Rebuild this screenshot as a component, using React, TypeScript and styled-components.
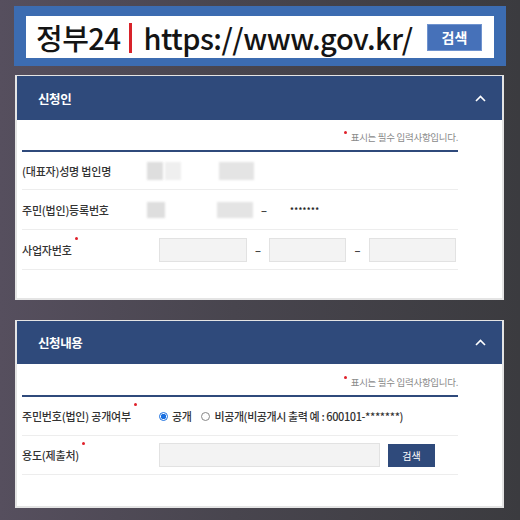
import styled, { createGlobalStyle } from 'styled-components';

const GlobalStyle = createGlobalStyle`
  html, body {
    margin: 0;
    padding: 0;
  }
  body {
    font-family: "Noto Sans CJK KR", "Noto Sans", sans-serif;
  }
`;

const Page = styled.div`
  width: 520px;
  height: 520px;
  overflow: hidden;
  box-sizing: border-box;
  padding-top: 6px;
  background: linear-gradient(90deg, #564f5e 0%, #48454e 45%, #3b3b3f 100%);
`;

const Banner = styled.div`
  margin: 0 14px;
  height: 60px;
  box-sizing: border-box;
  padding: 10px 12px 8px;
  background: #3c6cb1;
`;

const AddressBox = styled.div`
  height: 42px;
  background: #fff;
  display: flex;
  align-items: center;
  padding: 0 12px 0 10px;
  font-size: 29px;
  font-weight: 500;
  color: #141414;
  letter-spacing: -0.5px;
`;

const RedBar = styled.span`
  width: 3px;
  height: 30px;
  background: #d8232a;
  margin: 2px 11px 0 9px;
`;

const BannerButton = styled.span`
  margin-left: auto;
  width: 55px;
  height: 27px;
  box-sizing: border-box;
  border: 1px solid #6f93cf;
  background: #4671b9;
  color: #fff;
  font-size: 14px;
  font-weight: 700;
  letter-spacing: 0;
  display: flex;
  align-items: center;
  justify-content: center;
`;

const Card = styled.section<{ $top: number; $bottom: number }>`
  margin: ${(p) => p.$top}px 16px 0 15px;
  background: #fff;
  border: 2px solid #e4e4e4;
  border-top-width: 1px;
  padding-bottom: ${(p) => p.$bottom}px;
`;

const Header = styled.div<{ $h: number }>`
  height: ${(p) => p.$h}px;
  background: #2f4a7b;
  display: flex;
  align-items: center;
  padding: 0 16px 0 21px;
`;

const HeaderTitle = styled.span`
  color: #fff;
  font-size: 12.5px;
  font-weight: 700;
  letter-spacing: -0.4px;
`;

const Chevron = styled.svg`
  margin-left: auto;
`;

const Body = styled.div`
  padding: 0 44px 0 5px;
`;

const Note = styled.div<{ $pt: number }>`
  padding: ${(p) => p.$pt}px 0 6px;
  line-height: 14px;
  text-align: right;
  font-size: 9.5px;
  color: #8a8a8a;
  letter-spacing: -0.3px;
`;

const Dot = styled.span`
  display: inline-block;
  width: 3px;
  height: 3px;
  border-radius: 50%;
  background: #e0202a;
  vertical-align: 7px;
  margin-right: 4px;
`;

const Rule = styled.div`
  height: 2px;
  background: #2f4a7b;
`;

const Row = styled.div<{ $h: number }>`
  height: ${(p) => p.$h}px;
  display: grid;
  grid-template-columns: 125px 1fr;
  align-items: center;
  border-bottom: 1px solid #ededed;
`;

const Label = styled.span<{ $required?: boolean }>`
  font-size: 11px;
  font-weight: 500;
  color: #333;
  letter-spacing: -0.2px;
  position: relative;
  justify-self: start;
  white-space: nowrap;
  &::after {
    content: '';
    display: ${(p) => (p.$required ? 'block' : 'none')};
    position: absolute;
    right: -6px;
    top: -5px;
    width: 3px;
    height: 3px;
    border-radius: 50%;
    background: #e0202a;
  }
`;

const Values = styled.div<{ $indent: number }>`
  display: flex;
  align-items: center;
  padding-left: ${(p) => p.$indent}px;
`;

const Blur = styled.span<{ $w: number; $h: number; $tone: string; $ml?: number }>`
  width: ${(p) => p.$w}px;
  height: ${(p) => p.$h}px;
  background: ${(p) => p.$tone};
  margin-left: ${(p) => p.$ml ?? 0}px;
  filter: blur(0.8px);
`;

const Dash = styled.span<{ $w: number }>`
  width: ${(p) => p.$w}px;
  text-align: center;
  font-size: 11px;
  font-weight: 700;
  color: #444;
`;

const Stars = styled.span`
  font-size: 7.5px;
  font-weight: 700;
  color: #222;
  letter-spacing: 0.4px;
  margin-left: 15px;
`;

const Input = styled.span<{ $w: number }>`
  width: ${(p) => p.$w}px;
  height: 24px;
  box-sizing: border-box;
  background: #f3f3f3;
  border: 1px solid #e2e2e2;
`;

const Radio = styled.span<{ $on?: boolean }>`
  width: 9px;
  height: 9px;
  box-sizing: border-box;
  border-radius: 50%;
  border: 1px solid ${(p) => (p.$on ? '#1a6fe0' : '#888')};
  background: ${(p) => (p.$on ? 'radial-gradient(circle, #1a6fe0 0 2.5px, #fff 3px)' : '#fff')};
  margin-right: 4px;
`;

const Option = styled.span<{ $mr?: number }>`
  font-size: 11px;
  font-weight: 500;
  color: #333;
  letter-spacing: -0.4px;
  margin-right: ${(p) => p.$mr ?? 0}px;
  white-space: nowrap;
`;

const SmallButton = styled.span`
  margin-left: 8px;
  width: 47px;
  height: 23px;
  background: #2f4a7b;
  color: #fff;
  font-size: 10px;
  display: flex;
  align-items: center;
  justify-content: center;
`;

const ChevronUp = () => (
  <Chevron width="11" height="7" viewBox="0 0 11 7">
    <polyline points="1,6 5.5,1.5 10,6" fill="none" stroke="#fff" strokeWidth="1.6" />
  </Chevron>
);

const RequiredNote = ({ pt }: { pt: number }) => (
  <Note $pt={pt}>
    <Dot />
    표시는 필수 입력사항입니다.
  </Note>
);

export default function App() {
  return (
    <Page>
      <GlobalStyle />
      <Banner>
        <AddressBox>
          정부24
          <RedBar />
          https://www.gov.kr/
          <BannerButton>검색</BannerButton>
        </AddressBox>
      </Banner>

      <Card $top={9} $bottom={28}>
        <Header $h={44}>
          <HeaderTitle>신청인</HeaderTitle>
          <ChevronUp />
        </Header>
        <Body>
          <RequiredNote pt={10} />
          <Rule />
          <Row $h={37}>
            <Label>(대표자)성명 법인명</Label>
            <Values $indent={0}>
              <Blur $w={16} $h={18} $tone="#dedede" />
              <Blur $w={16} $h={18} $tone="#efefef" $ml={2} />
              <Blur $w={35} $h={18} $tone="#e4e4e4" $ml={38} />
            </Values>
          </Row>
          <Row $h={39}>
            <Label>주민(법인)등록번호</Label>
            <Values $indent={0}>
              <Blur $w={18} $h={16} $tone="#dedede" />
              <Blur $w={36} $h={16} $tone="#e4e4e4" $ml={52} />
              <Dash $w={22}>–</Dash>
              <Stars>*******</Stars>
            </Values>
          </Row>
          <Row $h={39}>
            <Label $required>사업자번호</Label>
            <Values $indent={12}>
              <Input $w={88} />
              <Dash $w={22}>–</Dash>
              <Input $w={77} />
              <Dash $w={23}>–</Dash>
              <Input $w={87} />
            </Values>
          </Row>
        </Body>
      </Card>

      <Card $top={20} $bottom={31}>
        <Header $h={43}>
          <HeaderTitle>신청내용</HeaderTitle>
          <ChevronUp />
        </Header>
        <Body>
          <RequiredNote pt={11} />
          <Rule />
          <Row $h={38}>
            <Label $required>주민번호(법인) 공개여부</Label>
            <Values $indent={12}>
              <Radio $on />
              <Option $mr={10}>공개</Option>
              <Radio />
              <Option>비공개(비공개시 출력 예 : 600101-*******)</Option>
            </Values>
          </Row>
          <Row $h={38}>
            <Label $required>용도(제출처)</Label>
            <Values $indent={12}>
              <Input $w={221} />
              <SmallButton>검색</SmallButton>
            </Values>
          </Row>
        </Body>
      </Card>
    </Page>
  );
}
